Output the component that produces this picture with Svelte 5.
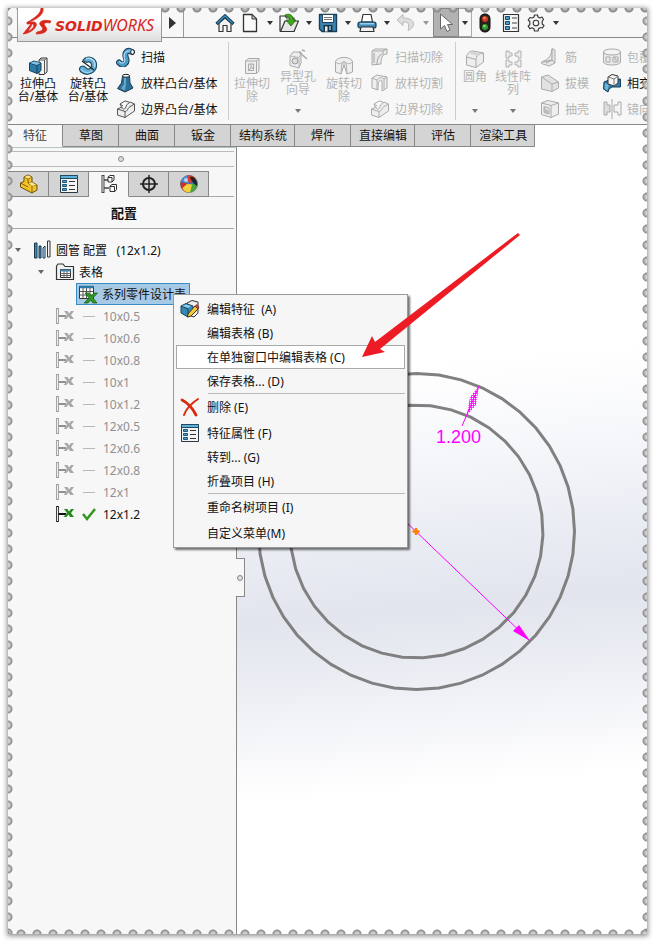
<script>
  const quick = [
    { icon: 'home', label: '主页', w: 26 },
    { icon: 'doc', label: '新建', caret: true, w: 24 },
    { icon: 'open', label: '打开', caret: true, w: 24 },
    { icon: 'save', label: '保存', caret: true, w: 24 },
    { icon: 'print', label: '打印', caret: true, w: 24 },
    { icon: 'undo', label: '撤消', caret: true, w: 24, off: true },
    { icon: 'cursor', label: '选择', caret: true, w: 26, boxed: true },
    { icon: 'light', label: '重建模型', w: 26 },
    { icon: 'props', label: '文件属性', w: 26 },
    { icon: 'gear', label: '选项', caret: true, w: 24 }
  ];

  const ribbon = [
    {
      kind: 'boss',
      big: [
        { icon: 'extrude', lines: ['拉伸凸', '台/基体'] },
        { icon: 'revolve', lines: ['旋转凸', '台/基体'] }
      ],
      cols: [[
        { icon: 'sweep', text: '扫描' },
        { icon: 'loft', text: '放样凸台/基体' },
        { icon: 'boundary', text: '边界凸台/基体' }
      ]]
    },
    {
      kind: 'cut',
      big: [
        { icon: 'cutExtrude', lines: ['拉伸切', '除'], off: true },
        { icon: 'hole', lines: ['异型孔', '向导'], off: true, drop: true },
        { icon: 'cutRevolve', lines: ['旋转切', '除'], off: true }
      ],
      cols: [[
        { icon: 'cutSweep', text: '扫描切除', off: true },
        { icon: 'cutLoft', text: '放样切割', off: true },
        { icon: 'boundary', text: '边界切除', off: true }
      ]]
    },
    {
      kind: 'feat',
      big: [
        { icon: 'fillet', lines: ['圆角'], off: true, drop: true },
        { icon: 'pattern', lines: ['线性阵', '列'], off: true, drop: true }
      ],
      cols: [
        [
          { icon: 'rib', text: '筋', off: true },
          { icon: 'draft', text: '拔模', off: true },
          { icon: 'shell', text: '抽壳', off: true }
        ],
        [
          { icon: 'wrap', text: '包覆', off: true },
          { icon: 'intersect', text: '相交' },
          { icon: 'mirror', text: '镜向', off: true }
        ]
      ]
    }
  ];

  const tabs = ['特征', '草图', '曲面', '钣金', '结构系统', '焊件', '直接编辑', '评估', '渲染工具'];
  const panes = [
    { icon: 'part', label: '设计树' },
    { icon: 'propsWide', label: '属性管理器' },
    { icon: 'config', label: '配置管理器' },
    { icon: 'target', label: '尺寸专家' },
    { icon: 'ball', label: '外观' }
  ];
  const configs = ['10x0.5', '10x0.6', '10x0.8', '10x1', '10x1.2', '12x0.5', '12x0.6', '12x0.8', '12x1', '12x1.2'];
  const current = '12x1.2';

  const menu = [
    { items: [
      { text: '编辑特征  (A)', icon: 'editFeature' },
      { text: '编辑表格 (B)' },
      { text: '在单独窗口中编辑表格 (C)', hot: true },
      { text: '保存表格... (D)' }
    ] },
    { line: true, items: [{ text: '删除 (E)', icon: 'remove' }] },
    { items: [
      { text: '特征属性 (F)', icon: 'propsWide' },
      { text: '转到... (G)' },
      { text: '折叠项目 (H)' }
    ] },
    { line: true, items: [{ text: '重命名树项目 (I)' }] },
    { items: [{ text: '自定义菜单(M)' }] }
  ];

  const ring = (r, n, phase) =>
    Array.from({ length: n }, (_, i) => {
      const a = phase + (i * 2 * Math.PI) / n;
      return `${(179.5 + r * Math.cos(a)).toFixed(1)},${(406.5 + r * Math.sin(a)).toFixed(1)}`;
    }).join(' ');
</script>

{#snippet caret()}
  <svg class="caret" width="6" height="4" viewBox="0 0 6 4" aria-hidden="true"><path d="M0 0H6L3 4Z" fill="currentColor" /></svg>
{/snippet}

{#snippet icon(name)}
  <svg class="icon" width="20" height="20" viewBox="0 0 20 20" fill="none" stroke-linejoin="round" aria-hidden="true">
    {#if name === 'home'}
      <path d="M4 10V18.5H8V12.5H12V18.5H16V10L10 5Z" fill="#f3f3f3" stroke="#333" stroke-width="1.2" />
      <path d="M1.5 11L10 2.8L18.5 11" stroke="#183c55" stroke-width="3.2" />
      <path d="M2.3 10.3L10 3L17.7 10.3" stroke="#3d8fbe" stroke-width="1.3" />
    {:else if name === 'doc'}
      <path d="M3.5 1.5H12L16.5 6V18.5H3.5Z" fill="#fafafa" stroke="#333" stroke-width="1.3" />
      <path d="M12 1.5V6H16.5Z" fill="#ccc" stroke="#333" />
    {:else if name === 'open'}
      <path d="M1 18V3H6L8 5H15V18Z" fill="#f5f5f5" stroke="#333" stroke-width="1.2" />
      <path d="M1.5 18.5L6 8H19.5L15 18.5Z" fill="#e6e6e6" stroke="#333" stroke-width="1.2" />
      <path d="M6 2C10 0 14.500 2 14 7H17L12 13L7 7H10.500C10.500 4 9 3 6 3Z" fill="#3fa71d" stroke="#226b0c" stroke-width=".8" />
    {:else if name === 'save'}
      <path d="M1.500 1.500H18.500V18.500H4L1.500 16Z" fill="#3b82ae" stroke="#17405c" stroke-width="1.4" />
      <rect x="4.500" y="1.500" width="11" height="8" fill="#fff" stroke="#24455b" />
      <path d="M6 4.500H14M6 6.500H14" stroke="#777" />
      <rect x="5.500" y="12" width="9" height="6.500" fill="#1e3341" /><rect x="7" y="13.500" width="2.500" height="5" fill="#eee" />
      <rect x="11" y="13" width="2" height="4" fill="#5ea6cf" />
    {:else if name === 'print'}
      <path d="M4.500 9L6 1.500H14L15.500 9Z" fill="#fff" stroke="#333" stroke-width="1.2" />
      <rect x="1" y="9" width="18" height="6" rx="2" fill="#3b8dbb" stroke="#173d57" stroke-width="1.2" />
      <path d="M3 10.800H17" stroke="#b6ddf2" stroke-width="1.2" />
      <path d="M4 14H16L17 18.500H3Z" fill="#f0f0f0" stroke="#333" stroke-width="1.2" />
    {:else if name === 'undo'}
      <path d="M7 1.500L1 7L7 12.500V9C12 8.500 14 11 12 17.500C20 14 20 5 7 5Z" fill="#dedede" stroke="#b9b9b9" />
    {:else if name === 'cursor'}
      <path d="M4.500 1V16L8.500 12.500L11 18.500L14 17L11.500 11.500H16.500Z" fill="#fff" stroke="#666" />
    {:else if name === 'light'}
      <rect x="5" y="1" width="10" height="18" rx="4.500" fill="#28221f" stroke="#111" />
      <circle cx="10" cy="6" r="3" fill="#d13b20" /><circle cx="9.500" cy="5" r="1.200" fill="#f08c70" />
      <circle cx="10" cy="14" r="3" fill="#2f9a2a" /><circle cx="9.500" cy="13" r="1.200" fill="#90dc7c" />
    {:else if name === 'props'}
      <rect x="2.500" y="1.500" width="15" height="17" fill="#f4f4f4" stroke="#333" stroke-width="1.200" />
      {#each [3.5, 8.5, 13.5] as y}
        <rect x="4.500" y={y} width="4" height="3" fill="#4ba0cb" stroke="#174b6a" />
        <path d="M11 {y + 1.5}H16" stroke="#444" />
      {/each}
    {:else if name === 'gear'}
      <path d="M8.500 2H11.500L12 4L14 5L16 4L17.500 6.500L16.200 8.200V11L18 12.500L16.500 15L14.500 14.500L12.500 15.800L12 18H8.500L8 15.800L6 14.800L4 15.800L2.200 13.200L3.800 11.500V8.500L2.200 7L4 4.500L6 5L8 4Z" fill="#f4f4f4" stroke="#3a3a3a" stroke-width="1.200" />
      <circle cx="10" cy="10" r="2.800" stroke="#3a3a3a" stroke-width="1.100" />
    {:else if name === 'extrude'}
      <path d="M11 4L13 2H19V16L16 18.500H11Z" fill="#f4f4f4" stroke="#333" /><path d="M11 4H16.500V18M16.500 4L19 2" stroke="#555" />
      <path d="M1.500 7L6 5L13 7V14.500L9 17.500L1.500 14.500Z" fill="#2d7ba6" stroke="#173f59" />
      <path d="M1.500 7L9 9.500V17.500M9 9.500L13 7" stroke="#173f59" /><path d="M2 7L6 5.500L12.500 7L9 9Z" fill="#7fc3e4" />
    {:else if name === 'revolve'}
      <path d="M5 4C9-1 18 1 18.500 8.500C19 17 9 21 3 16C0 13 2 10 5 10C8 10 8 14 11 13C15 12 14 5 10 6C8 6.500 6 6 5 4Z" fill="#65add3" stroke="#1b4c69" stroke-width="1.200" />
      <path d="M8 2.500C14 1 18 5 16.500 11" stroke="#b4dcf0" stroke-width="1.500" />
      <path d="M4 5L16 14" stroke="#222" stroke-width="1.200" />
      <path d="M3 13C6 18 11 17 14 15" stroke="#a0d2ea" stroke-width="1.300" />
    {:else if name === 'sweep'}
      <path d="M3 15.500C7 20 12 16 10 11C8 6 11 2 16 5" stroke="#173f59" stroke-width="6" stroke-linecap="round" />
      <path d="M3 15.500C7 20 12 16 10 11C8 6 11 2 16 5" stroke="#4a9bc6" stroke-width="4" stroke-linecap="round" />
      <path d="M3 14.500C7 18 9.500 15 8.500 11.500C7 7 10 3 15 4" stroke="#a8d8ef" stroke-width="1.200" />
      <ellipse cx="16.500" cy="5" rx="1.800" ry="2.300" fill="#fff" stroke="#222" />
    {:else if name === 'loft'}
      <path d="M6.500 3L5.500 10L1.500 15.500L9 19L17 15L14 10L13.500 3Z" fill="#2d7198" stroke="#173b52" />
      <path d="M8 4L8 11L5 15.500L9 17.500L10 11V4Z" fill="#7ebfdf" opacity=".7" />
      <ellipse cx="10" cy="2.800" rx="3.500" ry="1.500" fill="#e9f6fc" stroke="#222" />
    {:else if name === 'boundary'}
      <g class="tone" stroke="#555">
        <path d="M1.500 10L6 8C7 12 10 10 10.500 6L14 3L18.500 5V12L9 18.500L1.500 16Z" fill="#eee" />
        <path d="M1.500 10L9 12.500C11 13 12 9 13.500 8L18.500 5M9 12.500V18.500M5.500 8L4 5L9 2L13 3M4 5L7 7" />
      </g>
    {:else if name === 'cutExtrude'}
      <path d="M3.500 5L6 2.500H17V15L14.500 17.500H3.500Z" fill="#eee" stroke="#aaa" />
      <path d="M3.500 5H14.500V17.500M14.500 5L17 2.500M6.500 8H11.500V14.500H6.500ZM6.500 14.500L9 12V8M9 12H11.500" stroke="#aaa" />
    {:else if name === 'hole'}
      <path d="M2 7L5 3H13V14L11 19L2 16.500Z" fill="#eee" stroke="#aaa" /><path d="M2 7L11 8.500V19M11 8.500L13 5" stroke="#b5b5b5" />
      <circle cx="7" cy="12" r="3" fill="#ddd" stroke="#999" /><path d="M11 3L19 10M14 1L17 2" stroke="#aaa" stroke-width="1.600" />
    {:else if name === 'cutRevolve'}
      <path d="M1.500 5.500C3 0 17 0 18.500 5.500V16L13 18L10 9L7 18L1.500 16Z" fill="#eee" stroke="#aaa" />
      <path d="M1.500 5.500C3 8 6 8 8 7L10 5L12 7C14 8 17 8 18.500 5.500M8 7L7 17M12 7L13 17M10 5V9" stroke="#b0b0b0" />
    {:else if name === 'cutSweep'}
      <path d="M2 4L5 2H17V7C13 7 11 10 11 17L2 18Z" fill="#eaeaea" stroke="#aaa" />
      <path d="M2 4H13L17 2M13 4V7C9 8 7 11 7 17M4 6V16" stroke="#b0b0b0" stroke-width="1.200" />
    {:else if name === 'cutLoft'}
      <path d="M2 5L7 2L17 4V15L12 18V8C10 6 8 7 8 17L2 15Z" fill="#eee" stroke="#aaa" />
      <path d="M2 5L7 7C9 4 12 4 14 6V16M14 6L17 4M7 7V16" stroke="#b0b0b0" />
    {:else if name === 'fillet'}
      <path d="M1.500 8C2 4 5 2 8 2L18.500 4V13L11 18.500L1.500 16Z" fill="#eee" stroke="#aaa" />
      <path d="M1.500 8L11 10.500V18.500M11 10.500C11 7 14 4.500 18.500 4" stroke="#aaa" /><path d="M4 4.500L13 7L16 4.500L8 2.500Z" fill="#d5d5d5" />
    {:else if name === 'pattern'}
      <g fill="#eee" stroke="#b0b0b0"><path d="M3 2H6V4H9V7H6V9H3Z" /><path d="M18 2H15V4H12V7H15V9H18Z" /><path d="M3 11H6V13H9V16H6V18H3Z" /><path d="M18 11H15V13H12V16H15V18H18Z" /></g>
    {:else if name === 'rib'}
      <path d="M1.500 15L5 13.500C10 11 12 6 12 1.500L15 3V16L9 19L1.500 16.500Z" fill="#e6e6e6" stroke="#aaa" /><path d="M12 2V13L6 16M3 15L12 13L15 16" stroke="#a5a5a5" />
    {:else if name === 'draft'}
      <path d="M1.500 4L8 2L18.500 9V15L12 18.500L1.500 16Z" fill="#e2e2e2" stroke="#aaa" /><path d="M1.500 4L12 11V18.500M12 11L18.500 9" stroke="#aaa" />
    {:else if name === 'shell'}
      <path d="M1.500 4L8 1.500L18.500 4V15L11 18.500L1.500 15.500Z" fill="#eee" stroke="#aaa" /><path d="M1.500 4L11 6.500V18.500M11 6.500L18.500 4M4 7.500L9 9V15L4 13.500Z" stroke="#aaa" /><path d="M4 7.500L9 13V15L4 13.500Z" fill="#bbb" />
    {:else if name === 'wrap'}
      <path d="M1.500 5V15C2 19 18 19 18.500 15V5Z" fill="#eaeaea" stroke="#aaa" /><ellipse cx="10" cy="5" rx="8.500" ry="3" fill="#f4f4f4" stroke="#aaa" /><path d="M4 10H8V15H4ZM11 10H16V15H11ZM13 10V13H16" stroke="#aaa" />
    {:else if name === 'intersect'}
      <path d="M2 9L7 7L18.500 6V14L10 14L7 16L6 19L1.500 16Z" fill="#2f7eaa" stroke="#173f59" />
      <path d="M3 10L2.500 15.500L5.500 17.500L7 12Z" fill="#70b5d8" />
      <path d="M6 4L10 1.500L16 3V10L12 13L6 11Z" fill="#f5f5f5" stroke="#333" /><path d="M6 4L12 6V13M12 6L16 3" stroke="#777" />
    {:else if name === 'mirror'}
      <path d="M2 3H5V6H8V13H5V16H2Z" fill="#ddd" stroke="#aaa" /><path d="M19 3V16H16V13H12V6H16V3Z" fill="#f4f4f4" stroke="#aaa" /><path d="M10 0V20" stroke="#aaa" />
    {:else if name === 'part'}
      <path d="M1.500 9L5 7.500V3L9 1L13 3V8L18 11V16L13 19L1.500 13Z" fill="#f3c32b" stroke="#6b4d05" />
      <path d="M5 3L9 5V9L13 12V19M9 5L13 3M9 9L13 8M13 12L18 11M1.500 9L9 13" stroke="#8a6508" /><path d="M5.500 3L9 1.500L12.500 3L9 4.600ZM9.500 9L13 8.300L17.500 11L13 12Z" fill="#fbe585" />
    {:else if name === 'propsWide'}
      <rect x="1.500" y="1.500" width="17" height="17" fill="#f4f4f4" stroke="#2b3742" />
      {#each [7, 11, 15] as y}
        <rect x="3.500" y={y - 0.5} width="4" height="2" fill="#4aa3d0" stroke="#1c5577" />
        <path d="M10 {y + 0.5}H16" stroke="#333" />
      {/each}
      <rect x="1.500" y="1.500" width="17" height="3" fill="#5fb0d8" stroke="#1f4a63" />
    {:else if name === 'config'}
      <path d="M4 1V19" stroke="#444" stroke-width="3" /><path d="M4 2V18" stroke="#eee" /><path d="M5 6H10M5 14H10" stroke="#444" stroke-width="1.500" />
      <g fill="#fafafa" stroke="#333"><path d="M9 3L11 1.500H15V6L13 8H9Z" /><path d="M11 12L13 10.500H17.500V15.500L16 17.500H11Z" /><path d="M9 3.500H13V8M11 12.500H15.500V17" /></g>
    {:else if name === 'target'}
      <circle cx="10" cy="10" r="6" stroke="#222" stroke-width="2" /><path d="M10 1V19M1 10H19" stroke="#222" stroke-width="1.500" />
    {:else if name === 'ball'}
      <circle cx="10" cy="10" r="8.500" fill="#3578c4" stroke="#444" stroke-width=".6" />
      <path d="M10 10L2 7C4 2 8 1 11 1.500Z" fill="#4d8fd6" /><path d="M10 10L8 1.500C12 1 15 2 17 5Z" fill="#df3a28" /><path d="M1.800 8L10 10L8 18.300C3 17 1 13 1.800 8Z" fill="#c8342a" />
      <path d="M10 10L18.500 10C18 16 13 19 8 18.300Z" fill="#4aa73a" /><path d="M8 10L13 10.500L11 18.400C6 18.500 4 16 3.500 14Z" fill="#f3d13c" /><path d="M11 3C15 2 18.500 6 18 12C16 11 12 7 11 3Z" fill="#222" /><circle cx="7" cy="6" r="2" fill="#fff" opacity=".6" />
    {:else if name === 'books'}
      <path d="M2.500 3H5V18H2.500ZM7 6H9V18H7Z" fill="#3c8cb8" stroke="#17384c" /><path d="M11 8L13 6V18H11Z" fill="#d9edf7" stroke="#17384c" /><path d="M15.500 1H18V17H15.500Z" fill="#f4f4f4" stroke="#333" />
    {:else if name === 'folder'}
      <path d="M1.500 17.500V4L3 2H8L10 4.500H18.500V17.500Z" fill="#f1f1f1" stroke="#333" stroke-width="1.200" />
      <rect x="5.500" y="7.500" width="10" height="8" fill="#fff" stroke="#333" /><path d="M5.500 8.500H15.500" stroke="#3c8cb8" stroke-width="2" /><path d="M5.500 11.500H15.500M5.500 13.500H15.500M9 9V15.500M12 9V15.500" stroke="#444" stroke-width=".8" />
    {:else if name === 'sheet'}
      <path d="M1.500 2.500H15.500V14.500H1.500Z" fill="#fff" stroke="#333" /><path d="M1.500 3H15.500" stroke="#2b78a5" stroke-width="2.500" />
      <path d="M1.500 7.500H15.500M1.500 11H15.500M5 4V14.500M8.500 4V14.500M12 4V14.500" stroke="#555" />
      <path d="M7 9H11L13 12L16 9H19.500L15 14L19 19H15L12.500 16L10 19H6L11 14Z" fill="#2e9a24" stroke="#145a10" stroke-width=".7" />
    {:else if name === 'cfg'}
      <path d="M2.500 2V18" stroke="currentColor" stroke-width="2.600" /><path d="M2.500 3V17" stroke="#eee" /><path d="M3.500 10H11" stroke="currentColor" stroke-width="2" />
      <path class="x" d="M9 5H12.500L14 7.500L16 5H19L16 9L19 13H15L13.500 10.500L11.500 13H8.500L12 9Z" />
    {:else if name === 'editFeature'}
      <path d="M7 4L12 1.500L18 3V14L14 18L8 16Z" fill="#eee" stroke="#333" /><path d="M1 7L6 4.500L13 7V15L8 18L1 14Z" fill="#3988b4" stroke="#173f59" /><path d="M1 7L8 10V18" stroke="#173f59" /><path d="M2 7L6 5.500L11 7L8 9Z" fill="#8accea" />
      <path d="M8 15L15 7L18 10L11 17L7.500 18Z" fill="#f4c93c" stroke="#4b3a08" /><path d="M15 7L18 10L19 8L17 5.500Z" fill="#d24b40" stroke="#642020" stroke-width=".6" />
    {:else if name === 'remove'}
      <path d="M2 3C8 6 13 12 16 18" stroke="#d92b0b" stroke-width="2.800" stroke-linecap="round" /><path d="M18 2C12 6 6 12 4 18" stroke="#d92b0b" stroke-width="2" stroke-linecap="round" />
    {/if}
  </svg>
{/snippet}

<div class="page">
  <div class="stamp">
    <div class="app">
      <header class="titlebar">
        <a class="logo" href="#top" id="top">
          <svg width="30" height="30" viewBox="0 0 30 30" fill="#d9271c" stroke="#d9271c" stroke-width=".7" aria-hidden="true">
            <path d="M18 0H20C21 5 17 9 9 13L5 14C11 10 18 6 18 0Z" />
            <path d="M4 14H11C17 15 11 25 0 26L8 16L9 17L5 23C10 22 13 16 9 16H4Z" />
            <path d="M28 13C20 11 14 14 18 18C21 21 20 23 14 24L13 26C23 26 26 22 22 18C20 15 22 14 27 15Z" />
          </svg>
          <span class="word"><b>SOLID</b><i>WORKS</i></span>
        </a>
        <button class="flyout" aria-label="展开菜单"><svg width="8" height="12" viewBox="0 0 8 12"><path d="M0 0L7 6L0 12Z" fill="#333" /></svg></button>
        <nav class="quick">
          {#each quick as q}
            <button class:boxed={q.boxed} style:width="{q.w}px" aria-label={q.label} disabled={q.off}>{@render icon(q.icon)}</button>
            {#if q.caret}
              <button class="more" class:edge={q.boxed} class:off={q.off} aria-label="{q.label}选项">{@render caret()}</button>
            {/if}
          {/each}
        </nav>
      </header>

      <section class="ribbon">
        {#each ribbon as g}
          <div class="group {g.kind}">
            {#each g.big as b}
              <button class="big" class:drop={b.drop} disabled={b.off}>
                {@render icon(b.icon)}
                <span>{#each b.lines as l}<span class="line">{l}</span>{/each}</span>
                {#if b.drop}{@render caret()}{/if}
              </button>
            {/each}
            {#each g.cols as col}
              <div class="col">
                {#each col as s}
                  <button class="small" disabled={s.off}>{@render icon(s.icon)}{s.text}</button>
                {/each}
              </div>
            {/each}
          </div>
        {/each}
      </section>

      <div class="body">
        <nav class="tabs">
          {#each tabs as t, i}<button class:active={i === 0} class:long={t.length > 2}>{t}</button>{/each}
        </nav>

        <div class="work">
          <aside class="panel">
            <div class="grip"><i class="dot"></i></div>
            <nav class="panes">
              {#each panes as p, i}<button class:active={i === 2} aria-label={p.label}>{@render icon(p.icon)}</button>{/each}
            </nav>
            <h2>配置</h2>
            <ul class="tree">
              <li class="root">{@render caret()}{@render icon('books')}<span>圆管 配置&nbsp;&nbsp; (12x1.2)</span></li>
              <li class="sub">{@render caret()}{@render icon('folder')}<span>表格</span></li>
              <li class="table"><button>{@render icon('sheet')}系列零件设计表</button></li>
              {#each configs as c}
                <li class="cfg" class:on={c === current}>
                  {@render icon('cfg')}
                  <svg class="mark" width="16" height="14" viewBox="0 0 16 14" fill="none" aria-hidden="true">
                    {#if c === current}<path d="M2 7L6 12L14 2" stroke="#36951c" stroke-width="2.500" />{:else}<path d="M2 7.500H14" stroke="#b8b8b8" />{/if}
                  </svg>
                  <span>{c}</span>
                </li>
              {/each}
            </ul>
            <button class="handle" aria-label="折叠面板"><i class="dot"></i></button>
          </aside>
          <main class="view"></main>
        </div>

        <svg class="sketch" width="410" height="600" viewBox="0 0 410 600" fill="none">
          <defs>
            <pattern id="hatch" width="2" height="2" patternUnits="userSpaceOnUse"><path d="M0 0H2M0 0V2" stroke="#f0f" stroke-width="1.500" /></pattern>
          </defs>
          <polygon points={ring(158, 44, 0)} stroke="#808080" stroke-width="3" />
          <polygon points={ring(126.5, 38, 0.03)} stroke="#808080" stroke-width="3" />
          <path d="M142 371L292 515M242 261L225 301" stroke="#f0f" />
          <path d="M293 516L282 500L276 506Z" fill="#f0f" />
          <path d="M242 261L239 280L230 290L233 272Z" fill="url(#hatch)" />
          <path d="M175.500 406.500H182.500M179 403V410" stroke="#ff8000" stroke-width="2.500" />
          <text x="199" y="318">1.200</text>
        </svg>

        <ul class="menu">
          {#each menu as g}
            <li class:ruled={g.line}>
              {#each g.items as m}
                <button class:hot={m.hot}><span class="slot">{#if m.icon}{@render icon(m.icon)}{/if}</span>{m.text}</button>
              {/each}
            </li>
          {/each}
        </ul>

        <svg class="pointer" width="158" height="125" viewBox="0 0 158 125" aria-hidden="true">
          <path d="M0 124L10 103L13 109L156 0L158 2L18 116L23 119Z" fill="#ed1c24" />
        </svg>
      </div>
    </div>
    <i class="bite left"></i><i class="bite right"></i><i class="bite top"></i><i class="bite bottom"></i>
  </div>
</div>

<style>
  :global(body) { background: #fff; }
  .page { display: flex; min-height: 100vh; padding: 8px 7px 8px 8px; }
  .page, .page :global(*) { box-sizing: border-box; }
  .stamp {
    display: flex;
    flex: 1;
    min-width: 0;
    position: relative;
    color: #111;
    font: 12px/13px "Noto Sans", "Noto Sans CJK SC", sans-serif;
    box-shadow: 0 1px 5px 1px rgba(0, 0, 0, .45);
  }
  .app { display: flex; flex: 1; min-width: 0; flex-direction: column; overflow: hidden; background: #f7f7f7; }
  button { margin: 0; padding: 0; border: 0; background: none; color: inherit; font: inherit; }
  ul, h2 { margin: 0; padding: 0; list-style: none; }
  svg { flex: none; display: block; }

  .bite { position: absolute; pointer-events: none; }
  .left, .right { top: 0; bottom: 0; width: 5px; background-size: 5px 16px; background-position: 0 5px; }
  .top, .bottom { left: 0; right: 0; height: 5px; background-size: 16px 5px; background-position: 5px 0; }
  .left { left: 0; background-image: radial-gradient(circle at 0 50%, #ddd 0, #c4c4c4 2px, #8c8c8c 4px, transparent 5px); }
  .right { right: 0; background-image: radial-gradient(circle at 100% 50%, #ddd 0, #c4c4c4 2px, #8c8c8c 4px, transparent 5px); }
  .top { top: 0; background-image: radial-gradient(circle at 50% 0, #ddd 0, #b0b0b0 2px, #858585 4px, transparent 5px); }
  .bottom { bottom: 0; background-image: radial-gradient(circle at 50% 100%, #ddd 0, #c4c4c4 2px, #8c8c8c 4px, transparent 5px); }

  .titlebar { display: flex; height: 30px; border-bottom: 1px solid #888; padding-left: 9px; }
  .logo {
    display: flex; align-items: flex-start; gap: 2px; z-index: 1; width: 145px; height: 34px; padding-left: 5px;
    border: 1px solid #999; border-top: 0; background: linear-gradient(#fff 30%, #dedede);
    color: #d9271c; text-decoration: none;
  }
  .word { display: flex; align-items: baseline; padding-top: 11px; font-style: italic; }
  .word b { font: italic bold 14px/13px "DejaVu Sans", sans-serif; }
  .word i { font-size: 16px; }
  .flyout { display: flex; align-items: center; justify-content: center; width: 22px; border-right: 1px solid #999; }
  .quick { display: flex; padding-left: 28px; }
  .quick button { display: flex; flex: none; align-items: center; justify-content: center; }
  .quick .more { width: 15px; color: #333; }
  .quick .boxed { background: #b2b2b2; border: 1px solid #888; }
  .quick .more.edge { width: 13px; border: 1px solid #aaa; border-left: 0; }
  .quick .more.off { color: #999; }

  .ribbon { display: flex; height: 87px; border-bottom: 1px solid #888; white-space: nowrap; }
  .group { display: flex; flex: none; }
  .group + .group::before { content: ""; align-self: center; height: 78px; border-left: 1px solid #ccc; }
  .big { display: flex; flex-direction: column; align-items: center; gap: 1px; padding-top: 18px; }
  .big.drop { padding: 11px 0; }
  .big .caret { margin-top: auto; color: #777; }
  .line { display: block; }
  .boss { width: 220px; padding-left: 5px; }
  .boss .big { width: 50px; }
  .cut { width: 227px; }
  .cut .big { width: 46px; }
  .feat .big { width: 38px; }
  .col { display: flex; flex-direction: column; padding: 6px 3px 0; }
  .small { display: flex; align-items: center; gap: 5px; height: 26px; }
  .feat .col { width: 62px; padding-left: 8px; }
  button:disabled { color: #b4b4b4; }
  button:disabled .tone { stroke: #aaa; }

  .body { display: flex; flex: 1; flex-direction: column; position: relative; }
  .tabs { display: flex; background: #fff; }
  .tabs button { height: 22px; padding: 0 15px 0 16px; border: solid #888; border-width: 0 1px 1px 0; background: #d4d4d4; white-space: nowrap; }
  .tabs .long { padding: 0 7px 0 8px; }
  .tabs .active { padding-left: 15px; border-bottom-color: #f7f7f7; background: #f7f7f7; color: #444; }
  .work { display: flex; flex: 1; }
  .panel { position: relative; width: 229px; border-right: 1px solid #888; border-top: 1px solid #b4c4c4; background: #f7f7f7; }
  .grip { display: flex; align-items: center; justify-content: center; height: 16px; margin: 3px 2px 4px 0; border: solid #bbb; border-width: 1px 0; }
  .dot { width: 6px; height: 6px; border: 1px solid #888; border-radius: 50%; background: #ddd; }
  .panes { display: flex; margin-right: 2px; border-bottom: 1px solid #aaa; }
  .panes button { display: flex; align-items: center; justify-content: center; width: 40px; height: 26px; margin-bottom: -1px; border: 1px solid #888; border-left: 0; background: #d4d4d4; }
  .panes button:first-child { width: 41px; padding-left: 2px; }
  .panes .active { border-bottom-color: #f7f7f7; background: #f7f7f7; }
  .panel h2 { height: 32px; margin-right: 2px; padding-left: 6px; border-bottom: 1px solid #aaa; font-size: 13px; line-height: 32px; text-align: center; }
  .tree { padding-top: 10px; white-space: nowrap; }
  .tree li { display: flex; align-items: center; height: 22px; }
  .tree .caret { margin-right: 11px; color: #666; }
  .root { padding-left: 7px; }
  .root span, .sub span { margin-left: 4px; }
  .sub { padding-left: 30px; }
  .table { padding-left: 68px; }
  .table button { display: flex; align-items: center; gap: 4px; width: 114px; height: 22px; padding-left: 1px; border: 1px solid #3c8cc4; background: #a6c9e6; }
  .cfg { padding-left: 47px; color: #909090; }
  .mark { margin: 0 6px; }
  .cfg .x { fill: #a8a8a8; }
  .cfg.on { color: #111; }
  .cfg.on .x { fill: #278a1c; }
  .handle { position: absolute; top: 410px; right: -9px; display: flex; align-items: center; justify-content: center; width: 9px; height: 39px; border: 1px solid #888; border-left: 0; background: #f7f7f7; }
  .view { flex: 1; background: linear-gradient(175deg, #fff 28%, #f7f8fb 38%, #e9ecf3 50%, #e2e5ed 58%, #e9ebf2 64%, #f3f4f8 71%, #fff 80%); }

  .sketch { position: absolute; top: 0; left: 229px; }
  .sketch text { fill: #f0f; font: 18px "Liberation Sans", sans-serif; }
  .menu {
    position: absolute; top: 169px; left: 165px; width: 235px; padding: 2px; border: 1px solid #999;
    background: #f6f6f6; box-shadow: 2px 2px 2px rgba(0, 0, 0, .55);
  }
  .menu li + li { padding-top: 2px; }
  .menu .ruled { background: linear-gradient(#bbb, #bbb) 100% 0 / 197px 1px no-repeat; }
  .menu button { display: flex; align-items: center; width: 100%; height: 24px; border: 1px solid transparent; text-align: left; white-space: pre; }
  .menu .hot { border-color: #aaa; background: #fff; }
  .slot { width: 30px; padding-left: 3px; }
  .pointer { position: absolute; top: 108px; left: 354px; }
</style>
